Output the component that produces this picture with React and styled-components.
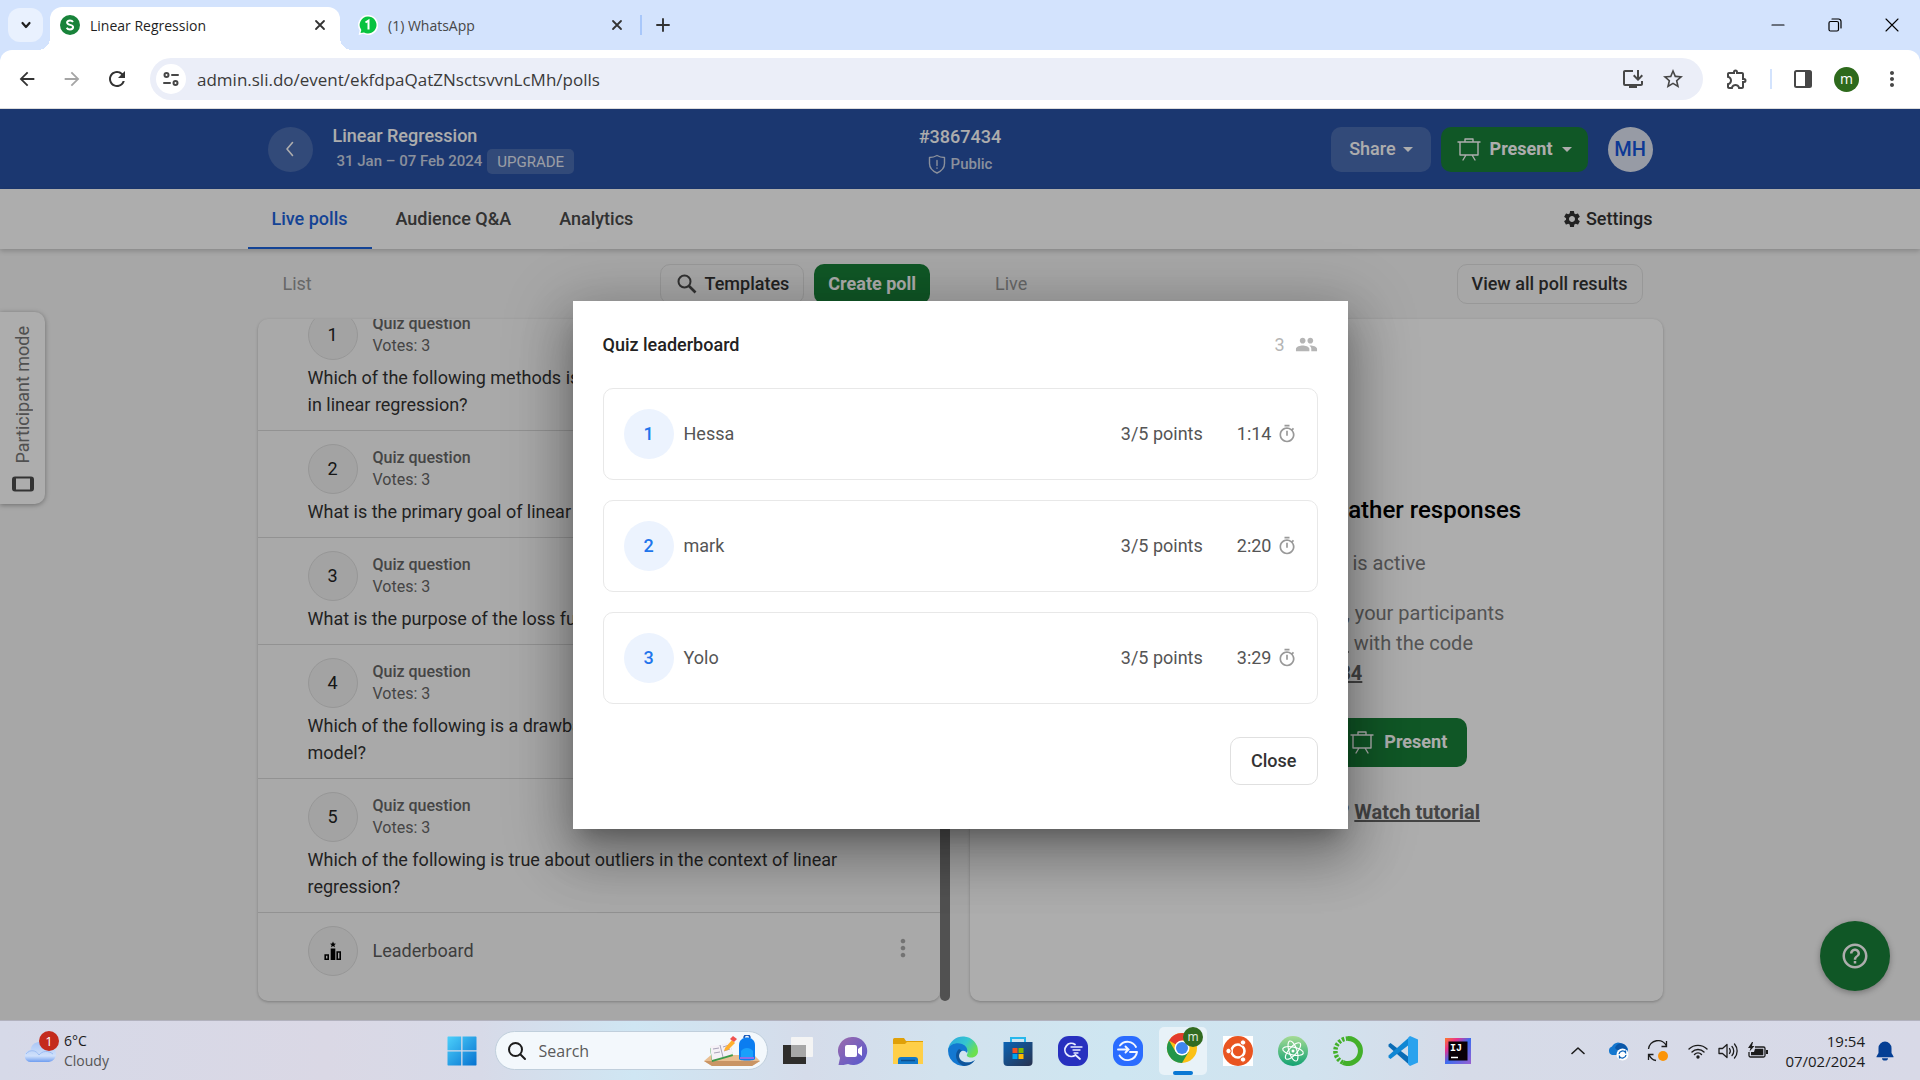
import React from "react";
import styled, { createGlobalStyle, css } from "styled-components";
import {
  MdArrowBack,
  MdArrowForward,
  MdRefresh,
  MdInstallDesktop,
  MdStarOutline,
  MdOutlineExtension,
  MdSettings,
  MdHelpOutline,
  MdPeople,
  MdOutlineTimer,
  MdMoreVert,
} from "react-icons/md";

const GlobalStyle = createGlobalStyle`
  *, *::before, *::after { box-sizing: border-box; }
  body { margin: 0; font-family: Roboto, "Liberation Sans", sans-serif; }
  button, input { font: inherit; color: inherit; }
  button { margin: 0; padding: 0; border: 0; background: none; }
  p, h1, h2, ul, ol { margin: 0; padding: 0; font: inherit; list-style: none; }
  a { color: inherit; }
  svg { display: block; flex: none; }
`;

const systemFont = css`
  font-family: "Open Sans", "Noto Sans", sans-serif;
`;

const Screen = styled.div`
  height: 100vh;
  display: flex;
  flex-direction: column;
  overflow: hidden;
`;

/* ---------- Browser chrome ---------- */

const TabStrip = styled.header`
  ${systemFont}
  flex: none;
  height: 50px;
  display: flex;
  align-items: flex-end;
  padding-left: 8px;
  background: #d3e3fd;
  color: #1f1f1f;
  font-size: 14px;
`;

const TabSearch = styled.button`
  width: 35px;
  height: 34px;
  margin: 0 7px 8px 0;
  display: grid;
  place-items: center;
  border-radius: 12px;
  background: #e9f1fe;
`;

const Tab = styled.div`
  position: relative;
  width: ${(p) => (p.$active ? 290 : 300)}px;
  height: 43px;
  display: flex;
  align-items: center;
  gap: 10px;
  padding: 0 ${(p) => (p.$active ? 12 : 15)}px 7px ${(p) => (p.$active ? 10 : 18)}px;
  border-radius: 12px 12px 0 0;
  background: ${(p) => (p.$active ? "#fff" : "transparent")};
  color: ${(p) => (p.$active ? "#1f1f1f" : "#474747")};

  &::before,
  &::after {
    content: ${(p) => (p.$active ? '""' : "none")};
    position: absolute;
    bottom: 0;
    width: 12px;
    height: 12px;
  }
  &::before {
    left: -12px;
    background: radial-gradient(circle at 0 0, transparent 12px, #fff 12px);
  }
  &::after {
    right: -12px;
    background: radial-gradient(circle at 100% 0, transparent 12px, #fff 12px);
  }
`;

const TabTitle = styled.span`
  flex: 1;
  white-space: nowrap;
`;

const GlyphButton = styled.button`
  display: grid;
  place-items: center;
  width: ${(p) => p.$size || 16}px;
  height: ${(p) => p.$size || 16}px;
  color: ${(p) => p.$color || "#333"};
`;

const NewTab = styled.div`
  align-self: center;
  display: flex;
  align-items: center;
  gap: 13px;
  &::before {
    content: "";
    width: 2px;
    height: 20px;
    background: #a8c7fa;
  }
`;

const WindowControls = styled.div`
  margin-left: auto;
  align-self: center;
  display: flex;
`;

const WindowButton = styled.button`
  width: 57px;
  height: 48px;
  display: grid;
  place-items: center;
`;

const Toolbar = styled.div`
  ${systemFont}
  flex: none;
  height: 59px;
  background: #d3e3fd;
`;

const ToolbarInner = styled.div`
  height: 59px;
  display: flex;
  align-items: center;
  padding: 0 16px 0 15px;
  border-bottom: 1px solid #dcdcdc;
  border-radius: 12px 12px 0 0;
  background: #fff;
  color: #474747;
`;

const NavButtons = styled.div`
  display: flex;
  gap: 21px;
  margin-right: 21px;
`;

const Omnibox = styled.form`
  flex: 1;
  height: 42px;
  display: flex;
  align-items: center;
  gap: 11px;
  padding: 0 18px 0 6px;
  border-radius: 21px;
  background: #ebeef8;
`;

const SiteInfo = styled.button`
  width: 30px;
  height: 30px;
  display: grid;
  place-items: center;
  border-radius: 50%;
  background: #fff;
`;

const UrlInput = styled.input`
  flex: 1;
  min-width: 0;
  padding: 0;
  border: 0;
  outline: 0;
  background: none;
  color: #3a3a3a;
  font-size: 17px;
`;

const BarActions = styled.div`
  display: flex;
  align-items: center;
  gap: ${(p) => p.$gap}px;
  margin-left: ${(p) => p.$lead || 0}px;
`;

const BarDivider = styled.span`
  width: 2px;
  height: 20px;
  background: #d3e3fd;
`;

const Profile = styled.button`
  width: 25px;
  height: 25px;
  border-radius: 50%;
  background: #2e6a1c;
  color: #fff;
  font-size: 14px;
  line-height: 20px;
`;

/* ---------- Web page ---------- */

const Page = styled.main`
  position: relative;
  flex: 1;
  min-height: 0;
  display: flex;
  flex-direction: column;
  overflow: hidden;
  background: #f6f6f6;
  color: #383838;
  font-size: 18px;
  line-height: 24px;
`;

const Wrap = styled.div`
  width: 100%;
  max-width: ${(p) => p.$max}px;
  margin: 0 auto;
`;

const EventBar = styled.div`
  flex: none;
  height: 80px;
  display: flex;
  background: #2952a5;
  color: #fff;
`;

const EventRow = styled(Wrap)`
  display: grid;
  grid-template-columns: 1fr auto 1fr;
  align-items: center;
`;

const EventLeft = styled.div`
  display: flex;
  align-items: center;
  gap: 20px;
`;

const BackButton = styled.button`
  width: 45px;
  height: 45px;
  display: grid;
  place-items: center;
  border-radius: 50%;
  background: #4b6db3;
`;

const EventTitle = styled.h1`
  font-weight: 500;
`;

const EventMeta = styled.div`
  display: flex;
  align-items: center;
  justify-content: ${(p) => (p.$center ? "center" : "flex-start")};
  gap: 5px;
  margin-top: ${(p) => (p.$center ? 2 : 0)}px;
  padding-left: ${(p) => (p.$center ? 0 : 4)}px;
  color: #ccd4e6;
  font-size: 15px;
  font-weight: 500;
  line-height: 26px;
`;

const Upgrade = styled.button`
  height: 25px;
  padding: 0 10px;
  border-radius: 5px;
  background: #4b6db3;
  color: #e4e9f4;
  font-weight: 400;
`;

const EventCode = styled.div`
  padding-top: 4px;
  text-align: center;
  font-weight: 500;
`;

const EventActions = styled.div`
  display: flex;
  justify-content: flex-end;
  align-items: center;
  gap: 10px;
`;

const ActionButton = styled.button`
  height: ${(p) => p.$height || 45}px;
  display: flex;
  align-items: center;
  gap: ${(p) => p.$gap || 7}px;
  padding: 0 ${(p) => p.$pad || 18}px;
  border-radius: 10px;
  white-space: nowrap;
  font-weight: 500;
  ${(p) =>
    p.$kind === "green" &&
    css`
      background: #198038;
      color: #fff;
      font-weight: 700;
    `}
  ${(p) =>
    p.$kind === "blue" &&
    css`
      background: #4b6db3;
      color: #fff;
    `}
  ${(p) =>
    p.$kind === "outline" &&
    css`
      border: 1px solid #e0e0e0;
      color: #333;
    `}
`;

const Caret = styled.span`
  border: 5px solid transparent;
  border-top-color: currentColor;
  border-bottom: 0;
`;

const Avatar = styled.button`
  width: 45px;
  height: 45px;
  margin-left: 10px;
  border-radius: 50%;
  background: #dfe5f3;
  color: #1455dc;
  font-size: 20px;
  font-weight: 500;
`;

const NavBar = styled.nav`
  position: relative;
  flex: none;
  height: 60px;
  display: flex;
  background: #fff;
  box-shadow: 0 2px 5px rgba(0, 0, 0, 0.2);
`;

const NavRow = styled(Wrap)`
  display: flex;
  justify-content: space-between;
`;

const NavTabs = styled.div`
  display: flex;
  margin-left: -10px;
`;

const NavTab = styled.a`
  padding: 18px 24px 0;
  border-bottom: 2px solid ${(p) => (p.$active ? "#1d64dc" : "transparent")};
  color: ${(p) => (p.$active ? "#1d64dc" : "#4a4a4a")};
  font-weight: 500;
  text-decoration: none;
`;

const Settings = styled.button`
  display: flex;
  align-items: center;
  gap: 4px;
  margin-right: 10px;
  color: #333;
  font-weight: 500;
`;

const Board = styled(Wrap)`
  flex: 1;
  min-height: 0;
  display: grid;
  grid-template-columns: 1fr 1fr;
  column-gap: 20px;
  padding: 15px 0 19px;
`;

const Column = styled.section`
  min-height: 0;
  min-width: 0;
  display: flex;
  flex-direction: column;
  gap: 15px;
`;

const ColumnHead = styled.div`
  flex: none;
  display: flex;
  align-items: center;
  gap: 10px;
  padding: 0 20px 0 25px;
`;

const ColumnLabel = styled.h2`
  flex: 1;
  color: #999;
`;

const PanelArea = styled.div`
  flex: 1;
  min-height: 0;
  display: flex;
`;

const Panel = styled.div`
  flex: 1;
  min-width: 0;
  display: flex;
  flex-direction: column;
  justify-content: ${(p) => (p.$centered ? "center" : "flex-end")};
  align-items: ${(p) => (p.$centered ? "center" : "stretch")};
  overflow: hidden;
  border-radius: 10px;
  background: ${(p) => (p.$centered ? "#fff" : "#fafafa")};
  box-shadow: 0 1px 3px rgba(0, 0, 0, 0.25);
`;

const ScrollTrack = styled.div`
  width: 10px;
  display: flex;
  align-items: flex-end;
`;

const ScrollThumb = styled.div`
  width: 10px;
  height: 90%;
  border-radius: 5px;
  background: #787878;
`;

const PollItem = styled.li`
  flex: none;
  padding: 13px 50px 12px;
  border-bottom: 1px solid #d8d8d8;
  &:last-child {
    padding-right: 15px;
    padding-bottom: 25px;
    border-bottom: 0;
  }
`;

const PollHead = styled.div`
  display: flex;
  align-items: center;
  gap: 15px;
`;

const PollNumber = styled.span`
  width: 50px;
  height: 50px;
  display: grid;
  place-items: center;
  border: 1px solid #dedede;
  border-radius: 50%;
  background: #f0f0f0;
  color: #222;
`;

const PollMeta = styled.div`
  color: #666;
  font-size: 16px;
  line-height: 22px;
`;

const PollKind = styled.div`
  font-weight: 500;
`;

const PollQuestion = styled.p`
  padding-top: 4px;
  color: #333;
  line-height: 27px;
  white-space: pre-line;
`;

const LeaderLabel = styled.span`
  flex: 1;
  color: #5c5c5c;
`;

const MoreButton = styled(GlyphButton)`
  align-self: flex-start;
`;

const Headline = styled.h2`
  margin-bottom: 22px;
  color: #000;
  font-size: 24px;
  font-weight: 500;
  line-height: 32px;
`;

const Hint = styled.p`
  margin-bottom: 20px;
  color: #7c7c7c;
  font-size: 20px;
  line-height: 30px;
  text-align: center;
  &:last-child {
    margin-bottom: 0;
  }
  a {
    font-weight: ${(p) => (p.$plainLinks ? 400 : 700)};
    color: #666;
  }
`;

const StartActions = styled.div`
  display: flex;
  gap: 20px;
  margin: 10px 0 30px;
`;

const ParticipantMode = styled.button`
  position: absolute;
  left: 0;
  top: 203px;
  width: 45px;
  height: 192px;
  display: flex;
  flex-direction: column;
  align-items: center;
  gap: 12px;
  padding-top: 14px;
  border-radius: 0 10px 10px 0;
  background: #fff;
  color: #777;
  box-shadow: 0 1px 5px rgba(0, 0, 0, 0.35);
`;

const VerticalText = styled.span`
  writing-mode: vertical-rl;
  transform: rotate(180deg);
  white-space: nowrap;
`;

const HelpButton = styled.button`
  position: absolute;
  right: 30px;
  bottom: 29px;
  width: 70px;
  height: 70px;
  display: grid;
  place-items: center;
  border-radius: 50%;
  background: #198038;
  color: #fff;
  box-shadow: 0 2px 6px rgba(0, 0, 0, 0.3);
`;

/* ---------- Dialog ---------- */

const Backdrop = styled.div`
  position: absolute;
  inset: 0;
  display: grid;
  place-items: center;
  background: rgba(0, 0, 0, 0.32);
`;

const Dialog = styled.section`
  width: 775px;
  padding: 30px 30px 44px;
  background: #fff;
  box-shadow: 0 14px 20px -9px rgba(0, 0, 0, 0.25), 0 30px 48px 4px rgba(0, 0, 0, 0.18),
    0 12px 58px 10px rgba(0, 0, 0, 0.22);
`;

const DialogHead = styled.div`
  height: 28px;
  display: flex;
  align-items: center;
  justify-content: space-between;
  margin-bottom: 29px;
`;

const DialogTitle = styled.h2`
  color: #222;
  font-weight: 500;
`;

const PlayerCount = styled.div`
  display: flex;
  align-items: center;
  gap: 10px;
  color: #b5b5b5;
`;

const Ranking = styled.ol`
  display: flex;
  flex-direction: column;
  gap: 20px;
`;

const RankRow = styled.li`
  height: 92px;
  display: flex;
  align-items: center;
  padding: 0 20px;
  border: 1px solid #e8e8e8;
  border-radius: 10px;
  color: #555;
`;

const RankBadge = styled.span`
  width: 50px;
  height: 50px;
  margin-right: 10px;
  display: grid;
  place-items: center;
  border-radius: 50%;
  background: #ecf3fe;
  color: #1f75ec;
  font-weight: 500;
`;

const PlayerName = styled.span`
  flex: 1;
`;

const PlayerTime = styled.span`
  display: flex;
  align-items: center;
  gap: 5px;
  margin-left: 34px;
  svg {
    color: #999;
  }
`;

const DialogFoot = styled.div`
  display: flex;
  justify-content: flex-end;
  margin-top: 33px;
`;

/* ---------- Windows taskbar ---------- */

const Taskbar = styled.footer`
  ${systemFont}
  flex: none;
  height: 60px;
  display: grid;
  grid-template-columns: 1fr auto 1fr;
  align-items: center;
  border-top: 1px solid #b2b2be;
  background: linear-gradient(
    90deg,
    #d6d9e8 0%,
    #dad8e5 17%,
    #d7dae8 25%,
    #cfe6f3 33%,
    #d5dcea 42%,
    #d2e2ee 49%,
    #cee6f1 58%,
    #d1e3ef 68%,
    #d6dbe8 76%,
    #d8d9e7 100%
  );
  color: #1c1c1c;
  font-size: 14px;
  line-height: 20px;
`;

const Weather = styled.button`
  display: flex;
  align-items: center;
  gap: 4px;
  padding-left: 24px;
  text-align: left;
`;

const WeatherSub = styled.div`
  color: #555;
`;

const Apps = styled.div`
  display: flex;
  align-items: center;
`;

const AppButton = styled.button`
  width: 55px;
  height: 48px;
  display: grid;
  place-items: center;
`;

const ActiveApp = styled.span`
  width: 48px;
  height: 48px;
  display: flex;
  flex-direction: column;
  align-items: center;
  justify-content: flex-end;
  gap: 5px;
  border-radius: 5px;
  background: #e8f2f8;
  &::after {
    content: "";
    width: 20px;
    height: 4px;
    border-radius: 2px;
    background: #0a78d4;
  }
`;

const SearchBox = styled.label`
  width: 273px;
  height: 39px;
  margin: 0 3px 0 5px;
  padding: 0 6px 0 11px;
  display: flex;
  align-items: center;
  gap: 12px;
  border: 1px solid #c0cfdc;
  border-radius: 20px;
  background: #f3f8fc;
  font-size: 16px;
`;

const SearchInput = styled.input`
  flex: 1;
  min-width: 0;
  padding: 0;
  border: 0;
  outline: 0;
  background: none;
  &::placeholder {
    color: #5a5a5a;
    opacity: 1;
  }
`;

const Tray = styled.div`
  justify-self: end;
  display: flex;
  align-items: center;
  gap: 9px;
  padding-right: 25px;
`;

const TrayApps = styled.div`
  display: flex;
  gap: 9px;
  margin-right: 5px;
`;

const TraySlot = styled.button`
  width: ${(p) => (p.$wide ? 31 : 21)}px;
  height: 40px;
  display: grid;
  place-items: center;
`;

const Clock = styled.div`
  width: 88px;
  text-align: right;
  font-size: 15px;
`;

/* ---------- Drawings ---------- */

const Stroke = ({ w = 16, h, d, sw = 2, box, color = "currentColor", children }) => (
  <svg
    width={w}
    height={h || w}
    viewBox={box || `0 0 ${w} ${h || w}`}
    fill="none"
    stroke={color}
    strokeWidth={sw}
    strokeLinecap="round"
    strokeLinejoin="round"
  >
    {d && <path d={d} />}
    {children}
  </svg>
);

const CrossIcon = () => <Stroke w={16} d="M4 4l8 8M12 4l-8 8" sw={1.8} />;

const EaselIcon = ({ size = 24 }) => (
  <Stroke w={size} box="0 0 24 24" sw={1.4} d="M1 5h22M3 5v13h18V5M8 5V2h8v3M9 18l-3 5M15 18l3 5" />
);

const LensIcon = () => (
  <Stroke w={24} color="#4a4a4a">
    <circle cx="9.500" cy="9.500" r="6" />
    <path d="M14 14l6.500 6.500" strokeWidth="2.600" strokeLinecap="butt" />
  </Stroke>
);

const SlidoIcon = () => (
  <svg width="20" height="20" viewBox="0 0 20 20">
    <circle cx="10" cy="10" r="10" fill="#18833a" />
    <path
      d="M13 7c-.6-1-1.600-1.500-3-1.500-1.700 0-2.900.8-2.900 2.100 0 3 6 1.500 6 4.500 0 1.500-1.300 2.400-3.100 2.400-1.600 0-2.700-.6-3.300-1.700"
      fill="none"
      stroke="#fff"
      strokeWidth="2"
    />
  </svg>
);

const WhatsAppIcon = () => (
  <svg width="20" height="20" viewBox="0 0 20 20">
    <path d="M10 0a10 10 0 1 1-4.600 18.800L.6 20l1.100-4.600A10 10 0 0 1 10 0z" fill="#fff" />
    <path d="M10 1.500a8.500 8.500 0 1 1-4 16L2.500 18l.8-3A8.500 8.500 0 0 1 10 1.500z" fill="#08c33f" />
    <path d="M7.500 7.500L10.500 5.500v9" fill="none" stroke="#fff" strokeWidth="2" />
  </svg>
);

const TuneIcon = () => (
  <Stroke w={18} sw={2}>
    <circle cx="4.500" cy="5" r="2" />
    <path d="M10 5h6M2 13h6" />
    <circle cx="13.500" cy="13" r="2" />
  </Stroke>
);

const SidePanelIcon = () => (
  <svg width="20" height="20" viewBox="0 0 20 20">
    <rect x="2" y="2" width="16" height="16" rx="1.500" fill="none" stroke="#474747" strokeWidth="2" />
    <path d="M12 2h6v16h-6z" fill="#474747" />
  </svg>
);

const ShieldIcon = () => (
  <Stroke w={18} h={20} sw={1.4}>
    <path d="M9 1.500c2.500 1.500 5 2 7.500 2v6c0 4-3 7.500-7.500 9.500C4.500 17 1.500 13.500 1.500 9.500v-6C4 3.500 6.500 3 9 1.500z" />
    <path d="M9 6.500v5M9 14v.2" />
  </Stroke>
);

const PodiumIcon = () => (
  <svg width="20" height="20" viewBox="0 0 20 20">
    <path d="M10 .5l.9 2 2.100.2-1.600 1.400.5 2.100L10 5.100 8.100 6.200l.5-2.100L7 2.700l2.100-.2z" />
    <path d="M7.700 7.500h4.600V19H7.700z" />
    <path d="M2.200 14h3v4.200h-3zM14.200 11h3v7.200h-3z" fill="none" stroke="#000" strokeWidth="1.600" />
  </svg>
);

const TabletIcon = () => (
  <svg width="22" height="16" viewBox="0 0 22 16">
    <rect x="1" y="1.500" width="20" height="13" rx="2" fill="none" stroke="#4c4c4c" strokeWidth="2" />
    <path d="M3 2v12M19 2v12" stroke="#4c4c4c" strokeWidth="2" />
  </svg>
);

const CloudIcon = () => (
  <svg width="36" height="40" viewBox="0 0 36 40">
    <defs>
      <linearGradient id="cloud" x1="0" y1="0" x2="0" y2="1">
        <stop offset="0" stopColor="#a9c6f5" />
        <stop offset=".7" stopColor="#cfe0fb" />
        <stop offset="1" stopColor="#6e9df0" />
      </linearGradient>
    </defs>
    <path d="M7 31a6 6 0 0 1-.5-12A9 9 0 0 1 23 15a7.500 7.500 0 0 1 2 16z" fill="url(#cloud)" />
    <path d="M2 23c4-5 10-4 13 1 3-4 9-5 14-1" fill="none" stroke="#9dbdf3" />
    <circle cx="25" cy="10" r="10" fill="#c42b1c" />
    <text x="25" y="15" textAnchor="middle" fontFamily="Open Sans, sans-serif" fontSize="13" fill="#fff">
      1
    </text>
  </svg>
);

const WindowsIcon = () => (
  <svg width="30" height="30" viewBox="0 0 30 30">
    <defs>
      <linearGradient id="win" x1="0" y1="0" x2="1" y2="1">
        <stop offset="0" stopColor="#4cd0fb" />
        <stop offset="1" stopColor="#0672d0" />
      </linearGradient>
    </defs>
    <path
      d="M1 .5h13.200v13.700H.5V1zM15.500.5H29l.5.5v13.200h-14zM.5 15.500h13.700v14H1l-.5-.5zM15.500 15.500h14V29l-.5.5H15.500z"
      fill="url(#win)"
    />
  </svg>
);

const SchoolArt = () => (
  <svg width="58" height="32" viewBox="0 0 58 32">
    <path d="M1 26l7-6h43l6 6-8 5H9z" fill="#e9bf92" />
    <path d="M1 26h56l-8 5H9z" fill="#c99565" />
    <path d="M7 13l20-5 3 13-21 6z" fill="#3d9a4a" />
    <path d="M7 11l10-1 10-3 3 12-10 3-11 3z" fill="#f5f1f7" />
    <path d="M17 10l3 12M10 14l6-1M11 18l6-1M20 12l6-2M21 16l6-2" stroke="#a8a3b8" fill="none" />
    <path d="M22 13l7-8 3 3-7 7-4 1z" fill="#ffb02e" />
    <path d="M27 4l3-3 4 3-3 3z" fill="#f0524f" />
    <path d="M41 3c0-4 6-4 6 0" fill="none" stroke="#1556b8" strokeWidth="1.500" />
    <path d="M36 10c0-10 16-10 16 0v14c0 2-16 2-16 0z" fill="#0b7df0" />
    <path d="M38 16c3-4 9-4 12 0v6H38z" fill="#1aa0fb" />
    <path d="M37 23h14" stroke="#8f6fe8" strokeWidth="2" />
  </svg>
);

const TaskViewIcon = () => (
  <svg width="30" height="30" viewBox="0 0 30 30">
    <path d="M0 9h23v19H0z" fill="#2f2e2c" />
    <rect x="8" y="1" width="22" height="20" rx="1" fill="#f4f4f4" />
    <path d="M8 9h15v12H8z" fill="#a7a7a7" />
  </svg>
);

const ChatIcon = () => (
  <svg width="30" height="30" viewBox="0 0 30 30">
    <defs>
      <linearGradient id="chat" x1="0" y1="0" x2="1" y2="1">
        <stop offset="0" stopColor="#9d6bab" />
        <stop offset="1" stopColor="#5558cf" />
      </linearGradient>
    </defs>
    <path d="M15 1a14 14 0 1 1-5 27c-3 1-6 1-9.500 1l1.500-7A14 14 0 0 1 15 1z" fill="url(#chat)" />
    <rect x="7" y="9" width="12" height="12" rx="2" fill="#fff" />
    <path d="M20 13l4-3v10l-4-3z" fill="#fff" />
  </svg>
);

const FolderIcon = () => (
  <svg width="30" height="28" viewBox="0 0 30 28">
    <path d="M0 2.500A1.500 1.500 0 0 1 1.500 1H11l2 3h17v6H0z" fill="#e0a008" />
    <path d="M0 7h12l2-2h16v22H0z" fill="#ffcf48" />
    <path d="M5 27v-4a3 3 0 0 1 3-3h14a3 3 0 0 1 3 3v4z" fill="#1379c9" />
    <path d="M8 23.500h14" stroke="#0c4f8e" strokeWidth="1.500" />
  </svg>
);

const EdgeIcon = () => (
  <svg width="30" height="30" viewBox="0 0 30 30">
    <defs>
      <linearGradient id="edgeTop" x1="0" y1="0" x2="1" y2=".5">
        <stop offset="0" stopColor="#2ba5e0" />
        <stop offset=".6" stopColor="#35c6cf" />
        <stop offset="1" stopColor="#6ce04f" />
      </linearGradient>
    </defs>
    <path d="M.2 13A15 15 0 0 1 30 15c0 4-3 6.500-6.500 6.500-3 0-5.500-1.500-4.500-3 2-3-1-7-6-7C7 11 1 15 .2 13z" fill="url(#edgeTop)" />
    <path d="M.2 13C2 8 9 6 14 8c5 2 6 6 5 9-3-4-8-2-8 3 0 6 9 9 16 4A15 15 0 0 1 .2 13z" fill="#1378d1" />
    <path d="M11 13c-5 4-4 14 5 17 5 0 9-3 11-6-7 5-16 2-16-4 0-3 1-4 3-5.500z" fill="#0f559b" />
  </svg>
);

const StoreIcon = () => (
  <svg width="30" height="30" viewBox="0 0 30 30">
    <defs>
      <linearGradient id="store" x1="0" y1="0" x2="1" y2="1">
        <stop offset="0" stopColor="#0b64b5" />
        <stop offset="1" stopColor="#28324e" />
      </linearGradient>
    </defs>
    <path d="M8 7V2h14v5" fill="none" stroke="#28b8ec" strokeWidth="2" />
    <path d="M.5 6h29v20a4 4 0 0 1-4 4h-21a4 4 0 0 1-4-4z" fill="url(#store)" />
    <path d="M9.500 12h5v5h-5z" fill="#f25022" />
    <path d="M15.500 12h5v5h-5z" fill="#7fba00" />
    <path d="M9.500 18h5v5h-5z" fill="#00a4ef" />
    <path d="M15.500 18h5v5h-5z" fill="#ffb900" />
  </svg>
);

const FinderIcon = () => (
  <svg width="30" height="30" viewBox="0 0 30 30">
    <rect width="30" height="30" rx="11" fill="#2730bf" />
    <g fill="none" stroke="#e9edff" strokeWidth="1.800" strokeLinecap="round">
      <path d="M17 8.500a6.500 6.500 0 1 0 .5 10.500l4.500 4" />
      <path d="M13 11h11M15 14h7M16 17h4" strokeWidth="1.300" />
    </g>
  </svg>
);

const SyncAppIcon = () => (
  <svg width="30" height="30" viewBox="0 0 30 30">
    <rect width="30" height="30" rx="11" fill="#2a6cff" />
    <g fill="none" stroke="#f2f6ff" strokeWidth="1.900" strokeLinecap="round">
      <path d="M7 9.500a9.500 9.500 0 0 1 16 1.500M24 16a9.500 9.500 0 0 1-17.500 3.500M24 16h-7" />
      <path d="M5 13.500h10M12.500 10.500l3 3-3 3" />
    </g>
  </svg>
);

const ChromeIcon = () => (
  <svg width="40" height="39" viewBox="0 0 40 39">
    <circle cx="19" cy="21" r="15" fill="#fbc116" />
    <path d="M19 21L6 13.500a15 15 0 0 1 26 0H19z" fill="#e33b2e" />
    <path d="M19 21l6.500 4L19 36A15 15 0 0 1 6 13.500l6.500 11z" fill="#23964a" />
    <circle cx="19" cy="21" r="7.500" fill="#fff" />
    <circle cx="19" cy="21" r="6" fill="#3f86f0" />
    <circle cx="30" cy="10" r="10" fill="#316b21" />
    <text x="30" y="14" textAnchor="middle" fontFamily="Open Sans, sans-serif" fontSize="12" fill="#e4efe0">
      m
    </text>
  </svg>
);

const UbuntuIcon = () => (
  <svg width="30" height="30" viewBox="0 0 30 30">
    <path d="M0 0h30v30H0z" fill="#fff" />
    <circle cx="15" cy="15" r="15" fill="#e95420" />
    <circle cx="15" cy="15" r="6.500" fill="none" stroke="#fff" strokeWidth="2.600" />
    <g fill="#fff" stroke="#e95420">
      <circle cx="5.500" cy="15" r="2.700" />
      <circle cx="20" cy="6.500" r="2.700" />
      <circle cx="20" cy="23.500" r="2.700" />
    </g>
  </svg>
);

const AtomIcon = () => (
  <svg width="30" height="30" viewBox="0 0 30 30">
    <defs>
      <linearGradient id="atom" x1="0" y1="0" x2="0" y2="1">
        <stop offset="0" stopColor="#a5db94" />
        <stop offset="1" stopColor="#12a272" />
      </linearGradient>
    </defs>
    <circle cx="15" cy="15" r="15" fill="url(#atom)" />
    <g fill="none" stroke="#fff" strokeWidth="1.100">
      <ellipse cx="15" cy="15" rx="10.500" ry="4" transform="rotate(12 15 15)" />
      <ellipse cx="15" cy="15" rx="10.500" ry="4" transform="rotate(72 15 15)" />
      <ellipse cx="15" cy="15" rx="10.500" ry="4" transform="rotate(132 15 15)" />
    </g>
    <circle cx="15" cy="15" r="1.500" fill="#fff" />
  </svg>
);

const AnacondaIcon = () => (
  <svg width="30" height="30" viewBox="0 0 30 30" fill="none" stroke="#43b02a">
    <path d="M15 2.500a12.500 12.500 0 1 1-5 24" strokeWidth="5" />
    <path d="M10 26.500A12.500 12.500 0 0 1 15 2.500" strokeWidth="4.500" strokeDasharray="2.500 1.500" />
  </svg>
);

const VSCodeIcon = () => (
  <svg width="30" height="30" viewBox="0 0 30 30">
    <path d="M2.500 7L22 22v7.500L.5 10.500v-2z" fill="#0b6cb5" />
    <path d="M2.500 23L22 8V.5L.5 19.500v2z" fill="#1187d4" />
    <path d="M22 0l8 3.500v23L22 30l-2-2V2z" fill="#2aa2ee" />
  </svg>
);

const IntelliJIcon = () => (
  <svg width="26" height="26" viewBox="0 0 26 26">
    <defs>
      <linearGradient id="ij" x1="0" y1="0" x2="1" y2="1">
        <stop offset="0" stopColor="#fc7a2a" />
        <stop offset=".25" stopColor="#e8318c" />
        <stop offset=".5" stopColor="#3c6df0" />
        <stop offset="1" stopColor="#9a5fd0" />
      </linearGradient>
    </defs>
    <path d="M0 0h26v26H0z" fill="url(#ij)" />
    <path d="M3.500 3.500h19v19h-19z" fill="#090006" />
    <text x="5" y="13" fontFamily="Liberation Mono, monospace" fontWeight="700" fontSize="10" fill="#fff">
      IJ
    </text>
    <path d="M6 19.500h7" stroke="#fff" strokeWidth="1.500" />
  </svg>
);

const OneDriveIcon = () => (
  <svg width="22" height="20" viewBox="0 0 22 20">
    <path d="M5 14A4.500 4.500 0 0 1 5 5.500 6.500 6.500 0 0 1 16 4a5 5 0 0 1 4 8l-4 2z" fill="#1477cf" />
    <path d="M8 7a6 6 0 0 1 12 3l-6 3z" fill="#0b57a8" />
    <circle cx="15.500" cy="13.500" r="6" fill="#fff" />
    <path d="M12 13a3.600 3.600 0 0 1 6.500-1.500v-2M19 14a3.600 3.600 0 0 1-6.500 1.500v2" fill="none" stroke="#0b62b8" strokeWidth="1.300" />
  </svg>
);

const UpdateIcon = () => (
  <svg width="22" height="22" viewBox="0 0 22 22">
    <path d="M1.500 9A9.500 9.500 0 0 1 19.500 6M19.500 1v5.500h-5M9 20.500a9 9 0 0 1-7-6M1.500 20v-5.500h5" fill="none" stroke="#1c1c1c" strokeWidth="1.300" />
    <circle cx="16" cy="16" r="5" fill="#fb9407" />
  </svg>
);

const WifiIcon = () => (
  <Stroke w={20} h={16} sw={1.4}>
    <path d="M1 6a13 13 0 0 1 18 0M4 9a8.500 8.500 0 0 1 12 0M6.500 11.500a5 5 0 0 1 7 0" />
    <circle cx="10" cy="14" r="1" fill="currentColor" />
  </Stroke>
);

const VolumeIcon = () => (
  <Stroke w={20} h={18} sw={1.3} d="M1 6.500v5h3.500L9 15.500v-13L4.500 6.500zM11.500 6.500c1 1.500 1 3.500 0 5M14 4.500c2.300 2.500 2.300 6.500 0 9M16.500 2c3.500 4 3.500 10 0 14" />
);

const BatteryIcon = () => (
  <svg width="20" height="18" viewBox="0 0 20 18" color="#1c1c1c">
    <path d="M7 5h8.500A1.500 1.500 0 0 1 17 6.500v7a1.500 1.500 0 0 1-1.500 1.500h-13A1.500 1.500 0 0 1 1 13.500V10" fill="none" stroke="currentColor" strokeWidth="1.300" />
    <path d="M7 6.800h8.300v6.500H3V10h3zM18 8h2v4h-2zM4 0L0 6h2.500L1.500 9.500 6.500 4H4L5 0z" fill="currentColor" />
  </svg>
);

const BellIcon = () => (
  <svg width="18" height="20" viewBox="0 0 18 20">
    <path d="M9 .5a6.500 6.500 0 0 1 6.500 6.500v5l2 3.500v.7H.5v-.7l2-3.500V7A6.500 6.500 0 0 1 9 .5zM6 17.300h6a3 2.300 0 0 1-6 0z" fill="#053f94" />
  </svg>
);

/* ---------- Content ---------- */

const polls = [
  "Which of the following methods is commonly used to fit the coefficients\nin linear regression?",
  "What is the primary goal of linear regression?",
  "What is the purpose of the loss function in linear regression?",
  "Which of the following is a drawback of using a linear regression\nmodel?",
  "Which of the following is true about outliers in the context of linear\nregression?",
];

const players = [
  { name: "Hessa", time: "1:14" },
  { name: "mark", time: "2:20" },
  { name: "Yolo", time: "3:29" },
];

const apps = [
  ["Task view", TaskViewIcon],
  ["Chat", ChatIcon],
  ["File Explorer", FolderIcon],
  ["Edge", EdgeIcon],
  ["Store", StoreIcon],
  ["Finder", FinderIcon],
  ["Sync", SyncAppIcon],
  ["Chrome", ChromeIcon, true],
  ["Ubuntu", UbuntuIcon],
  ["Atom", AtomIcon],
  ["Anaconda", AnacondaIcon],
  ["VS Code", VSCodeIcon],
  ["IntelliJ IDEA", IntelliJIcon],
];

function BrowserChrome() {
  return (
    <>
      <TabStrip>
        <TabSearch aria-label="Search tabs">
          <Stroke w={14} d="M3.500 5l3.500 4 3.500-4" sw={2.2} />
        </TabSearch>
        <Tab $active>
          <SlidoIcon />
          <TabTitle>Linear Regression</TabTitle>
          <GlyphButton aria-label="Close tab">
            <CrossIcon />
          </GlyphButton>
        </Tab>
        <Tab>
          <WhatsAppIcon />
          <TabTitle>(1) WhatsApp</TabTitle>
          <GlyphButton aria-label="Close tab">
            <CrossIcon />
          </GlyphButton>
        </Tab>
        <NewTab>
          <GlyphButton aria-label="New tab">
            <Stroke w={16} d="M8 2v12M2 8h12" sw={1.9} />
          </GlyphButton>
        </NewTab>
        <WindowControls>
          <WindowButton aria-label="Minimise">
            <Stroke w={14} d="M1 7h12" sw={1.2} color="#000" />
          </WindowButton>
          <WindowButton aria-label="Restore">
            <Stroke w={14} sw={1.2} color="#000">
              <rect x="1" y="3.500" width="9.500" height="9.500" rx="1.500" />
              <path d="M4 1h6.500A2.500 2.500 0 0 1 13 3.500V10" />
            </Stroke>
          </WindowButton>
          <WindowButton aria-label="Close">
            <Stroke w={14} d="M1 1l12 12M13 1L1 13" sw={1.1} color="#000" />
          </WindowButton>
        </WindowControls>
      </TabStrip>
      <Toolbar>
        <ToolbarInner>
          <NavButtons>
            <GlyphButton $size={24} aria-label="Back">
              <MdArrowBack size={22} />
            </GlyphButton>
            <GlyphButton $size={24} $color="#a5a5a5" aria-label="Forward">
              <MdArrowForward size={22} />
            </GlyphButton>
            <GlyphButton $size={24} aria-label="Reload">
              <MdRefresh size={24} />
            </GlyphButton>
          </NavButtons>
          <Omnibox onSubmit={(e) => e.preventDefault()}>
            <SiteInfo type="button" aria-label="Site information">
              <TuneIcon />
            </SiteInfo>
            <UrlInput
              aria-label="Address"
              defaultValue="admin.sli.do/event/ekfdpaQatZNsctsvvnLcMh/polls"
            />
            <BarActions $gap={16}>
              <MdInstallDesktop size={24} />
              <MdStarOutline size={24} />
            </BarActions>
          </Omnibox>
          <BarActions $gap={21} $lead={22}>
            <MdOutlineExtension size={24} />
            <BarDivider />
            <SidePanelIcon />
            <Profile aria-label="Profile">m</Profile>
            <MdMoreVert size={24} />
          </BarActions>
        </ToolbarInner>
      </Toolbar>
    </>
  );
}

function EventHeader() {
  return (
    <EventBar>
      <EventRow $max={1385}>
        <EventLeft>
          <BackButton aria-label="Back to events">
            <Stroke w={16} d="M10.500 1.500L5 8l5.500 6.500" sw={1.6} />
          </BackButton>
          <div>
            <EventTitle>Linear Regression</EventTitle>
            <EventMeta>
              <span>31 Jan – 07 Feb 2024</span>
              <Upgrade>UPGRADE</Upgrade>
            </EventMeta>
          </div>
        </EventLeft>
        <EventCode>
          #3867434
          <EventMeta $center>
            <ShieldIcon />
            <span>Public</span>
          </EventMeta>
        </EventCode>
        <EventActions>
          <ActionButton $kind="blue">
            Share
            <Caret />
          </ActionButton>
          <ActionButton $kind="green" $pad={16} $gap={9}>
            <EaselIcon />
            Present
            <Caret />
          </ActionButton>
          <Avatar aria-label="Account">MH</Avatar>
        </EventActions>
      </EventRow>
    </EventBar>
  );
}

function PollList() {
  return (
    <Column>
      <ColumnHead>
        <ColumnLabel>List</ColumnLabel>
        <ActionButton $kind="outline" $height={40} $pad={14} $gap={6}>
          <LensIcon />
          Templates
        </ActionButton>
        <ActionButton $kind="green" $height={40} $pad={14}>
          Create poll
        </ActionButton>
      </ColumnHead>
      <PanelArea>
        <Panel as="ul">
          {polls.map((question, i) => (
            <PollItem key={question}>
              <PollHead>
                <PollNumber>{i + 1}</PollNumber>
                <PollMeta>
                  <PollKind>Quiz question</PollKind>
                  Votes: 3
                </PollMeta>
              </PollHead>
              <PollQuestion>{question}</PollQuestion>
            </PollItem>
          ))}
          <PollItem>
            <PollHead>
              <PollNumber>
                <PodiumIcon />
              </PollNumber>
              <LeaderLabel>Leaderboard</LeaderLabel>
              <MoreButton $size={44} $color="#aaa" aria-label="More">
                <MdMoreVert size={28} />
              </MoreButton>
            </PollHead>
          </PollItem>
        </Panel>
        <ScrollTrack>
          <ScrollThumb />
        </ScrollTrack>
      </PanelArea>
    </Column>
  );
}

function LivePane() {
  return (
    <Column>
      <ColumnHead>
        <ColumnLabel>Live</ColumnLabel>
        <ActionButton $kind="outline" $height={40} $pad={14}>
          View all poll results
        </ActionButton>
      </ColumnHead>
      <PanelArea>
        <Panel $centered>
          <Headline>Present a live poll to gather responses</Headline>
          <Hint>This Slido event is active</Hint>
          <Hint $plainLinks>
            While you are presenting, your participants
            <br />
            can join on <a href="#join">slido.com</a> with the code
            <br />
            <a href="#code">
              <strong>#3867434</strong>
            </a>
          </Hint>
          <StartActions>
            <ActionButton $kind="outline" $height={49} $pad={20}>
              Invite people
            </ActionButton>
            <ActionButton $kind="green" $height={49} $pad={20} $gap={10}>
              <EaselIcon />
              Present
            </ActionButton>
          </StartActions>
          <Hint>
            Not sure how to start? <a href="#tutorial">Watch tutorial</a>
          </Hint>
        </Panel>
      </PanelArea>
    </Column>
  );
}

function Leaderboard() {
  return (
    <Backdrop>
      <Dialog role="dialog" aria-labelledby="dialog-title">
        <DialogHead>
          <DialogTitle id="dialog-title">Quiz leaderboard</DialogTitle>
          <PlayerCount>
            3
            <MdPeople size={23} />
          </PlayerCount>
        </DialogHead>
        <Ranking>
          {players.map((player, i) => (
            <RankRow key={player.name}>
              <RankBadge>{i + 1}</RankBadge>
              <PlayerName>{player.name}</PlayerName>
              <span>3/5 points</span>
              <PlayerTime>
                {player.time}
                <MdOutlineTimer size={20} />
              </PlayerTime>
            </RankRow>
          ))}
        </Ranking>
        <DialogFoot>
          <ActionButton $kind="outline" $height={48} $pad={20}>
            Close
          </ActionButton>
        </DialogFoot>
      </Dialog>
    </Backdrop>
  );
}

function WindowsTaskbar() {
  return (
    <Taskbar>
      <Weather>
        <CloudIcon />
        <div>
          6°C
          <WeatherSub>Cloudy</WeatherSub>
        </div>
      </Weather>
      <Apps>
        <AppButton aria-label="Start">
          <WindowsIcon />
        </AppButton>
        <SearchBox>
          <Stroke w={20} sw={2}>
            <circle cx="8.500" cy="8.500" r="6.500" />
            <path d="M13.500 13.500L18 18" />
          </Stroke>
          <SearchInput aria-label="Search" placeholder="Search" />
          <SchoolArt />
        </SearchBox>
        {apps.map(([label, Icon, active]) => (
          <AppButton key={label} aria-label={label}>
            {active ? (
              <ActiveApp>
                <Icon />
              </ActiveApp>
            ) : (
              <Icon />
            )}
          </AppButton>
        ))}
      </Apps>
      <Tray>
        <TrayApps>
          <TraySlot $wide aria-label="Hidden icons">
            <Stroke w={14} d="M1 9.500L7 4l6 5.500" sw={1.6} />
          </TraySlot>
          <TraySlot $wide aria-label="OneDrive">
            <OneDriveIcon />
          </TraySlot>
          <TraySlot $wide aria-label="Update">
            <UpdateIcon />
          </TraySlot>
        </TrayApps>
        <TraySlot aria-label="Network">
          <WifiIcon />
        </TraySlot>
        <TraySlot aria-label="Volume">
          <VolumeIcon />
        </TraySlot>
        <TraySlot aria-label="Battery">
          <BatteryIcon />
        </TraySlot>
        <Clock>
          19:54
          <br />
          07/02/2024
        </Clock>
        <TraySlot aria-label="Notifications">
          <BellIcon />
        </TraySlot>
      </Tray>
    </Taskbar>
  );
}

export default function App() {
  return (
    <Screen>
      <GlobalStyle />
      <BrowserChrome />
      <Page>
        <EventHeader />
        <NavBar>
          <NavRow $max={1405}>
            <NavTabs>
              <NavTab href="#polls" $active>
                Live polls
              </NavTab>
              <NavTab href="#qa">Audience Q&amp;A</NavTab>
              <NavTab href="#analytics">Analytics</NavTab>
            </NavTabs>
            <Settings>
              <MdSettings size={20} />
              Settings
            </Settings>
          </NavRow>
        </NavBar>
        <Board $max={1405}>
          <PollList />
          <LivePane />
        </Board>
        <ParticipantMode>
          <VerticalText>Participant mode</VerticalText>
          <TabletIcon />
        </ParticipantMode>
        <HelpButton aria-label="Help">
          <MdHelpOutline size={30} />
        </HelpButton>
        <Leaderboard />
      </Page>
      <WindowsTaskbar />
    </Screen>
  );
}
